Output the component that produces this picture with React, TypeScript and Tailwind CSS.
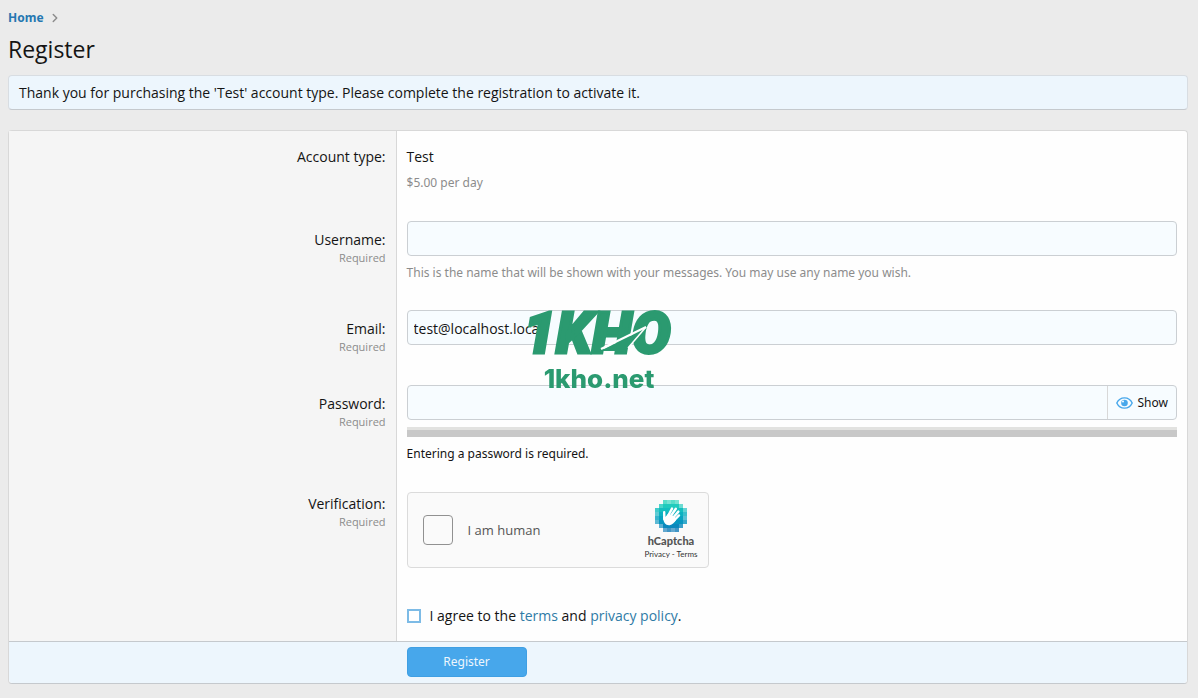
import { useState } from "react";
import type { ReactNode } from "react";
import { ChevronRight } from "lucide-react";

function Row({
  label,
  htmlFor,
  required,
  labelPad = "md:pt-6",
  bodyPad = "pb-[15px]",
  children,
}: {
  label?: string;
  htmlFor?: string;
  required?: boolean;
  labelPad?: string;
  bodyPad?: string;
  children: ReactNode;
}) {
  return (
    <div className="md:flex">
      <div
        className={`px-2.5 pt-[15px] text-left md:w-[32.9%] md:border-r md:border-[#d8d8d8] md:bg-[#f5f5f5] md:text-right ${labelPad}`}
      >
        {label && (
          <label htmlFor={htmlFor} className="block leading-5">
            {label}
          </label>
        )}
        {required && (
          <span className="block text-[11px] leading-4 text-[#8c8c8c]">
            Required
          </span>
        )}
      </div>
      <div className={`min-w-0 flex-1 px-2.5 pt-[15px] ${bodyPad}`}>
        {children}
      </div>
    </div>
  );
}

const inputClass =
  "block h-[35px] w-full rounded border border-[#cbcfd3] bg-[#f7fcff] px-1.5 pt-0.5 text-[14px] text-[#141414] outline-none focus:border-[#47a7eb]";

// row by row: [first column, number of tiles]
const tiles = [
  [2, 4],
  [1, 6],
  [0, 8],
  [0, 8],
  [0, 8],
  [0, 8],
  [1, 6],
  [2, 4],
];

const tileColors = [
  "#2fd6bd",
  "#1fcbbd",
  "#14bfbf",
  "#0cb2c0",
  "#08a4c0",
  "#0796c0",
  "#0b88bd",
  "#137cb8",
];

function CaptchaLogo() {
  return (
    <svg width="32" height="32" viewBox="0 0 32 32" aria-hidden="true">
      <g shapeRendering="crispEdges">
        {tiles.map(([start, count], y) =>
          Array.from({ length: count }, (_, i) => {
            const x = start + i;
            const edge = i === 0 || i === count - 1 || y === 0 || y === 7;
            return (
              <rect
                key={`${x}-${y}`}
                x={x * 4}
                y={y * 4}
                width="4"
                height="4"
                fill={tileColors[y]}
                opacity={edge ? ((x + y) % 2 ? 0.65 : 0.8) : 1}
              />
            );
          })
        )}
      </g>
      <g fill="none" stroke="#fff" strokeLinecap="round" strokeWidth="2.4">
        <path d="M9.300 19 9.200 12.200" />
        <path d="M12.500 17 17 8.600" />
        <path d="M14.500 18 20.800 8.800" />
        <path d="M17 19 23.400 11.600" />
        <path d="M18.500 21 24 15.400" />
      </g>
      <path
        fill="#fff"
        d="M8.100 16.500c1.500.6 2.600.6 3.400-.7l1.800-2.300 6.800 3.700 1 2.800c-1.600 2.200-3.600 4.900-6.400 5.200-3.800.5-6.700-2.900-6.600-8.700z"
      />
    </svg>
  );
}

function EyeIcon() {
  return (
    <svg width="17" height="12" viewBox="0 0 17 12" aria-hidden="true">
      <path
        fill="none"
        stroke="#47a7eb"
        strokeWidth="1.4"
        d="M.8 6C2.300 2.800 5 .9 8.500.9S14.700 2.800 16.200 6c-1.500 3.200-4.200 5.100-7.700 5.100S2.300 9.200.8 6z"
      />
      <circle cx="8.500" cy="6" r="3.300" fill="#47a7eb" />
      <circle cx="7" cy="4.500" r="1" fill="#f7fcff" />
    </svg>
  );
}

function Watermark() {
  return (
    <div className="pointer-events-none fixed inset-0 flex flex-col items-center justify-center text-[#2b9a70]">
      <div className="relative pr-1 font-[Roboto] text-[58px] leading-[56px] font-black italic [-webkit-text-stroke:3px_#2b9a70]">
        1KHO
        <svg
          className="absolute right-5 bottom-1.5"
          width="56"
          height="32"
          viewBox="0 0 56 32"
          aria-hidden="true"
        >
          <path fill="#2b9a70" d="M2 28 48 5 27 28z" />
          <path fill="none" stroke="#fff" strokeWidth="2" d="M3 26 48 4" />
          <path fill="none" stroke="#fff" strokeWidth="1.500" d="M48 4 30 25" />
        </svg>
      </div>
      <div className="pt-1 font-[Inter] text-[26px] leading-[28px] font-extrabold">
        1kho.net
      </div>
    </div>
  );
}

export default function App() {
  const [email, setEmail] = useState("test@localhost.local");
  const [showPassword, setShowPassword] = useState(false);

  return (
    <div className="min-h-screen bg-[#ebebeb] pr-2.5 pb-3.5 pl-2 font-['Open_Sans',sans-serif] text-[14px] text-[#141414]">
      <nav className="flex items-center gap-1 pt-[9px] font-['Noto_Sans',sans-serif] text-[12px] leading-[18px]">
        <a href="#" className="font-bold text-[#2577b1]">
          Home
        </a>
        <ChevronRight size={14} strokeWidth={2.5} className="text-[#8c8c8c]" />
      </nav>
      <h1 className="pt-1.5 text-[23px] leading-8">Register</h1>

      <div className="mt-2.5 rounded border border-[#d8dde2] border-b-[#c5c9cd] bg-[#edf6fd] px-2.5 py-1.5 leading-[21px]">
        Thank you for purchasing the 'Test' account type. Please complete the
        registration to activate it.
      </div>

      <form
        className="mt-5 rounded border border-[#d8d8d8] border-b-[#c5c9cd] bg-[#fefefe]"
        onSubmit={(e) => e.preventDefault()}
      >
        <Row label="Account type:" labelPad="md:pt-4">
          <div className="leading-[21px]">Test</div>
          <div className="pt-2 font-['Noto_Sans',sans-serif] text-[12px] leading-4 text-[#8c8c8c]">
            $5.00 per day
          </div>
        </Row>

        <Row
          label="Username:"
          htmlFor="username"
          required
          bodyPad="pb-3.5"
        >
          <input id="username" type="text" className={inputClass} />
          <div className="pt-[9px] font-['Noto_Sans',sans-serif] text-[12px] leading-4 text-[#8c8c8c]">
            This is the name that will be shown with your messages. You may use
            any name you wish.
          </div>
        </Row>

        <Row label="Email:" htmlFor="email" required bodyPad="pb-[25px]">
          <input
            id="email"
            type="email"
            value={email}
            onChange={(e) => setEmail(e.target.value)}
            className={inputClass}
          />
        </Row>

        <Row
          label="Password:"
          htmlFor="password"
          required
          bodyPad="pb-3.5"
        >
          <div className="flex h-[35px] rounded border border-[#cbcfd3] bg-[#f7fcff]">
            <input
              id="password"
              type={showPassword ? "text" : "password"}
              className="min-w-0 flex-1 px-1.5 outline-none"
            />
            <button
              type="button"
              className="flex items-center gap-[5px] border-l border-[#d8d8d8] px-2 font-['Noto_Sans',sans-serif] text-[12px]"
              onClick={() => setShowPassword(!showPassword)}
            >
              <EyeIcon />
              {showPassword ? "Hide" : "Show"}
            </button>
          </div>
          <div className="mt-[7px] h-2.5 border-t-[3px] border-[#e2e2e0] bg-[#c8c8c8]" />
          <div className="pt-2 font-['Noto_Sans',sans-serif] text-[12px] leading-[18px]">
            Entering a password is required.
          </div>
        </Row>

        <Row
          label="Verification:"
          htmlFor="human"
          required
          labelPad="md:pt-[17px]"
          bodyPad="pb-[22px]"
        >
          <div className="flex h-[76px] max-w-[302px] items-center rounded border border-[#dbdbdb] bg-[#fafafa] pr-2.5 pl-[15px]">
            <input
              id="human"
              type="checkbox"
              className="size-[30px] appearance-none rounded border border-[#919191] bg-[#fafafa] checked:bg-[#00838f]"
            />
            <label
              htmlFor="human"
              className="pt-0.5 pl-[15px] text-[13px] text-[#555555]"
            >
              I am human
            </label>
            <div className="ml-auto flex flex-col items-center">
              <CaptchaLogo />
              <span className="pt-0.5 font-[Lato] text-[11px] leading-[14px] font-black text-[#555555]">
                hCaptcha
              </span>
              <span className="font-[Lato] text-[8px] leading-3 text-[#333333]">
                <a href="#">Privacy</a> - <a href="#">Terms</a>
              </span>
            </div>
          </div>
        </Row>

        <Row>
          <div className="flex items-center gap-[9px] leading-[21px]">
            <input
              id="agree"
              type="checkbox"
              className="size-3.5 appearance-none border-2 border-[#7dbbe6] bg-white checked:bg-[#47a7eb]"
            />
            <label htmlFor="agree">
              I agree to the{" "}
              <a href="#" className="text-[#2f7ba6]">
                terms
              </a>{" "}
              and{" "}
              <a href="#" className="text-[#2f7ba6]">
                privacy policy
              </a>
              .
            </label>
          </div>
        </Row>

        <div className="flex rounded-b border-t border-[#c5c9cd] bg-[#edf6fd] pt-[5px] pb-1.5">
          <div className="hidden w-[32.9%] md:block" />
          <div className="px-2.5">
            <button
              type="submit"
              className="h-[30px] w-[120px] rounded border border-[#3f9fe3] bg-[#47a7eb] font-['Noto_Sans',sans-serif] text-[12px] text-[#edf6fd]"
            >
              Register
            </button>
          </div>
        </div>
      </form>

      <Watermark />
    </div>
  );
}
